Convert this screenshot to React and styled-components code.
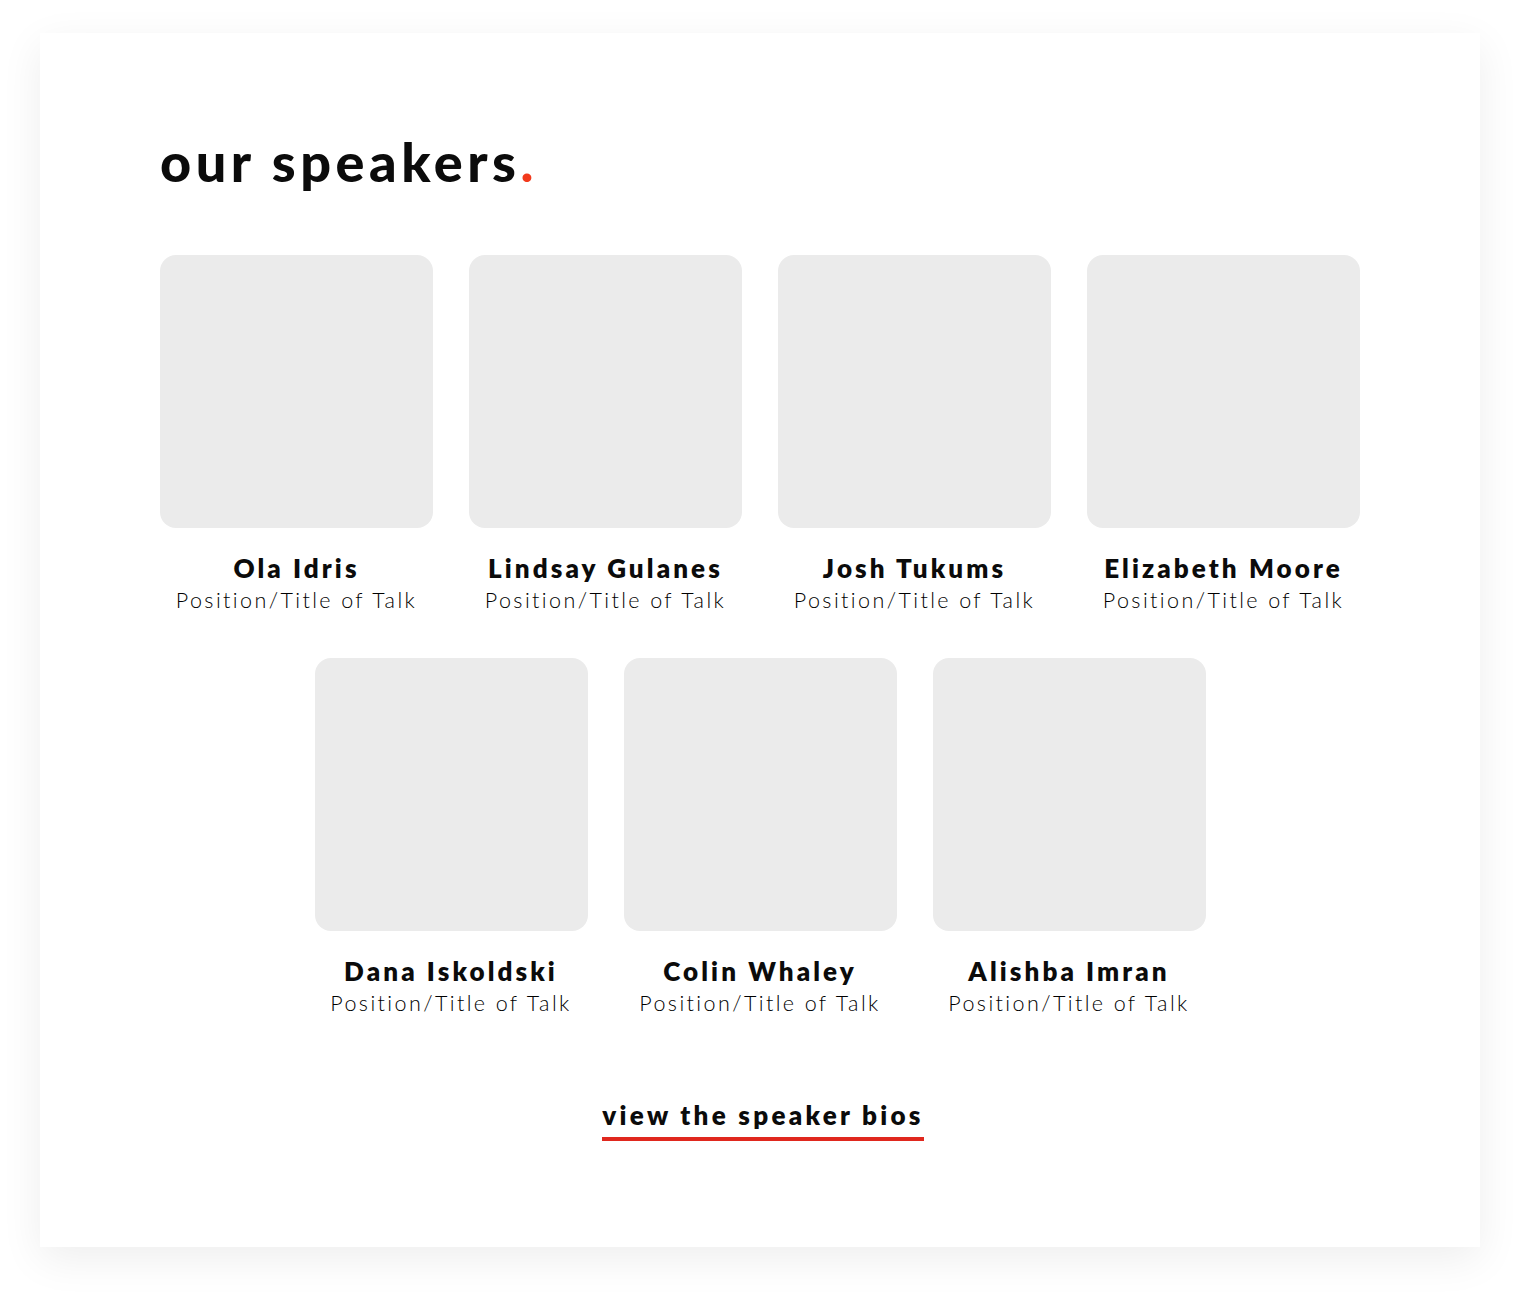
import React from "react";
import styled, { createGlobalStyle } from "styled-components";

const Global = createGlobalStyle`
  html, body { margin: 0; padding: 0; background: #ffffff; }
  body { font-family: "Lato", "Liberation Sans", sans-serif; color: #0b0b0b; }
`;

const Page = styled.div`
  padding: 33px 40px 47px;
`;

const Card = styled.section`
  background: #ffffff;
  box-shadow: 0 12px 40px rgba(0, 0, 0, 0.07);
  height: 1214px;
  box-sizing: border-box;
  padding: 99px 120px 0;
  display: flex;
  flex-direction: column;
`;

const Heading = styled.h2`
  margin: 0;
  font-family: "Lato", sans-serif;
  font-weight: 900;
  font-size: 54px;
  line-height: 60px;
  letter-spacing: 4.5px;
  color: #0b0b0b;
`;

const Dot = styled.span`
  color: #f23a1c;
`;

const Grid = styled.div`
  margin-top: 63px;
  display: flex;
  flex-wrap: wrap;
  justify-content: center;
  column-gap: 36px;
  row-gap: 45px;
`;

const Speaker = styled.div`
  width: 273px;
  display: flex;
  flex-direction: column;
  align-items: center;
`;

const Photo = styled.div`
  width: 273px;
  height: 273px;
  border-radius: 16px;
  background: #ebebeb;
`;

const Name = styled.div`
  margin-top: 24px;
  font-weight: 800;
  font-size: 26px;
  line-height: 32px;
  letter-spacing: 3.1px;
  white-space: nowrap;
`;

const Role = styled.div`
  margin-top: 3px;
  font-weight: 300;
  font-size: 21.5px;
  line-height: 26px;
  letter-spacing: 2.4px;
  color: #000000;
  white-space: nowrap;
`;

const LinkRow = styled.div`
  margin-top: 83px;
  display: flex;
  justify-content: center;
  padding-left: 6px;
`;

const BiosLink = styled.a`
  font-weight: 800;
  font-size: 26px;
  line-height: 32px;
  letter-spacing: 3.3px;
  color: #0b0b0b;
  text-decoration: none;
  padding-bottom: 6px;
  border-bottom: 4px solid #e0281e;
`;

const speakers = [
  "Ola Idris",
  "Lindsay Gulanes",
  "Josh Tukums",
  "Elizabeth Moore",
  "Dana Iskoldski",
  "Colin Whaley",
  "Alishba Imran",
];

export default function App() {
  return (
    <>
      <Global />
      <Page>
        <Card>
          <Heading>
            our speakers<Dot>.</Dot>
          </Heading>
          <Grid>
            {speakers.map((n) => (
              <Speaker key={n}>
                <Photo />
                <Name>{n}</Name>
                <Role>Position/Title of Talk</Role>
              </Speaker>
            ))}
          </Grid>
          <LinkRow>
            <BiosLink href="#">view the speaker bios</BiosLink>
          </LinkRow>
        </Card>
      </Page>
    </>
  );
}
